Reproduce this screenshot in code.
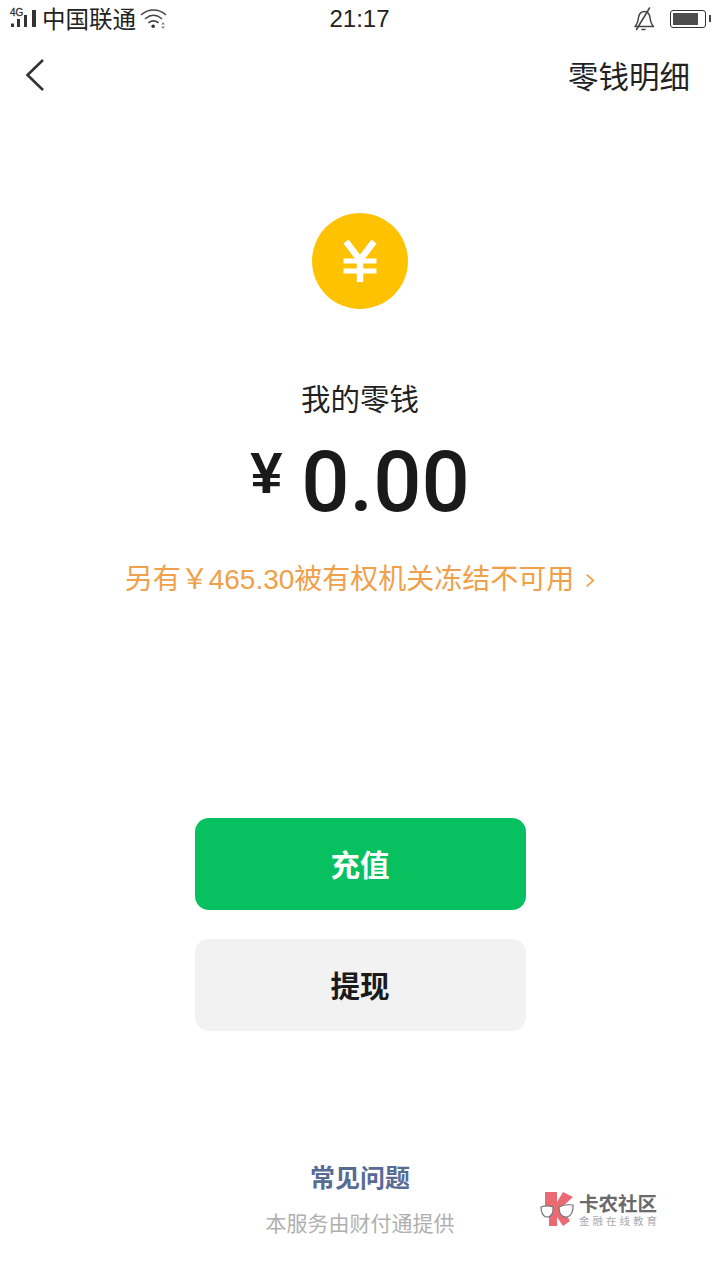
<div class="page">
  <header class="status">
    <div class="left">
      <span class="signal">
        <span class="net">4G</span>
        <svg width="28" height="20" viewBox="0 0 28 20"><g fill="#333"><rect x="0" y="16.500" width="3" height="3.500"/><rect x="6" y="12" width="3" height="8"/><rect x="13" y="8" width="3" height="12"/><rect x="21" y="3" width="4" height="17"/></g></svg>
      </span>
      <span class="carrier">中国联通</span>
      <svg class="wifi" width="28" height="22" viewBox="0 0 28 22" fill="none" stroke="#444" stroke-width="1.600" stroke-linecap="round"><path d="M1.500 6.500C8.500 .5 18.500 .5 25.500 6.500"/><path d="M5.500 10.500C10.500 6.500 16.500 6.500 21.500 10.500"/><path d="M9 14.500C12 12.300 15 12.300 18 14.500"/><circle cx="13.200" cy="18.200" r="1.800" fill="#333" stroke="none"/><path d="M21 16.500h4l-2-2.600zM21 18.500h4l-2 2.600z" fill="#888" stroke="none"/></svg>
    </div>
    <span class="time">21:17</span>
    <div class="right">
      <svg width="22" height="24" viewBox="0 0 22 24" fill="none" stroke="#444" stroke-width="1.500" stroke-linejoin="round" stroke-linecap="round"><path d="M2 19.500C4.500 17 5 14.500 5.400 11 6 6.500 8 4.500 11.500 4.500c3.500 0 5 2.500 5.600 6.500.4 3.500 1.200 6.300 3.400 8.500z"/><path d="M3.500 22.500 16.500 1"/><path d="M9 22.500h3"/></svg>
      <span class="battery"><span class="cap"></span><span class="fill"></span></span>
    </div>
  </header>

  <nav class="nav">
    <svg class="back" width="22" height="34" viewBox="0 0 22 34" fill="none" stroke="#333" stroke-width="2.600"><path d="M19 2 3.500 17 19 32"/></svg>
    <span class="detail">零钱明细</span>
  </nav>

  <main class="main">
    <div class="coin">
      <svg width="36" height="42" viewBox="0 0 36 42" fill="none" stroke="#fff"><path d="M4 1.500 18 20 32 1.500" stroke-width="6.500"/><path d="M18 18v24" stroke-width="6.500"/><path d="M1.500 21h33M1.500 31h33" stroke-width="5"/></svg>
    </div>
    <div class="label">我的零钱</div>
    <div class="amount"><span class="yen">¥</span><span class="value">0.00</span></div>
    <div class="frozen">
      <span>另有￥465.30被有权机关冻结不可用</span>
      <svg width="10" height="17" viewBox="0 0 12 18" fill="none" stroke="#f0a04a" stroke-width="2"><path d="M2 2l8 7-8 7"/></svg>
    </div>
    <button class="btn primary">充值</button>
    <button class="btn secondary">提现</button>
  </main>

  <footer class="footer">
    <div class="faq">常见问题</div>
    <div class="service">本服务由财付通提供</div>
    <div class="logo">
      <svg width="36" height="38" viewBox="0 0 36 38"><path d="M5 2h12v10l6-10 10 5-11 10 8 14-7 5-6-9v9H9v-9L5 17z" fill="#e96a72"/><path d="M1 17c4-1.500 8-1.500 12 0 .5 5-1 10-6 10-4 0-6-5-6-10zM19 17c5-2.500 10-2.500 14-2 .5 6-2 12-7 12-5 0-7-5-7-10z" fill="#fff" stroke="#777" stroke-width="1.200"/></svg>
      <div class="logo-text">
        <div class="logo-name">卡农社区</div>
        <div class="logo-sub">金融在线教育</div>
      </div>
    </div>
  </footer>
</div>

<style>
  :global(body) { margin: 0; background: #fff; }
  .page {
    width: 720px; height: 1280px; background: #fff; display: flex; flex-direction: column;
    font-family: "Noto Sans CJK SC", "Liberation Sans", sans-serif; color: #1a1a1a; overflow: hidden;
    position: relative;
  }
  .status { height: 38px; display: grid; grid-template-columns: 1fr auto 1fr; align-items: center; padding: 0 11px 0 10px; }
  .left { display: flex; align-items: center; }
  .signal { position: relative; width: 32px; height: 26px; display: block; }
  .signal svg { position: absolute; left: 1px; top: 1px; }
  .net { position: absolute; left: 0; top: 1px; font: 400 10px/11px "Liberation Sans", sans-serif; color: #333; -webkit-text-stroke: .3px #333; }
  .carrier { font-size: 23.500px; line-height: 30px; color: #222; position: relative; top: -1px; }
  .wifi { margin-left: 4px; }
  .time { font: 400 24px/30px "Liberation Sans", sans-serif; color: #222; }
  .right { display: flex; align-items: center; justify-content: flex-end; gap: 15px; }
  .battery { position: relative; width: 34px; height: 16px; border: 1.500px solid #333; border-radius: 3px; display: block; margin-right: 3px; }
  .fill { position: absolute; left: 2px; top: 2px; bottom: 2px; width: 25px; background: #4d4d4d; }
  .cap { position: absolute; right: -6px; top: 4px; width: 2px; height: 7px; background: #444; }
  .nav { height: 74px; display: flex; align-items: center; justify-content: space-between; padding: 0 30px 0 24px; }
  .back { display: block; }
  .detail { font-size: 30.500px; line-height: 40px; color: #222; }
  .main { display: flex; flex-direction: column; align-items: center; padding-top: 101px; }
  .coin { width: 96px; height: 96px; border-radius: 50%; background: #fec200; display: flex; align-items: center; justify-content: center; }
  .label { margin-top: 68px; font-size: 29.500px; line-height: 40px; color: #222; }
  .amount { margin-top: 15px; display: flex; align-items: flex-start; height: 100px; }
  .yen { font: 700 58px/60px "Liberation Sans", sans-serif; margin-top: 11px; margin-right: 19px; width: 32px; }
  .value { font: 500 85px/100px "Roboto", sans-serif; color: #1a1a1a; }
  .frozen { margin-top: 29px; display: flex; align-items: center; gap: 11px; color: #f0a04a; font-family: "Liberation Sans", "Noto Sans CJK SC", sans-serif; font-size: 28px; line-height: 38px; }
  .btn { width: 331px; height: 92px; border: 0; border-radius: 14px; font-family: inherit; font-size: 29.500px; font-weight: 700; padding: 0 0 2px; display: block; }
  .primary { margin-top: 219px; background: #07c160; color: #fff; }
  .secondary { margin-top: 29px; background: #f2f2f2; color: #1a1a1a; }
  .footer { display: flex; flex-direction: column; align-items: center; padding-top: 127px; }
  .faq { font-size: 25px; line-height: 36px; font-weight: 700; color: #576b95; }
  .service { margin-top: 13px; font-size: 21px; line-height: 30px; color: #b0b0b0; }
  .logo { position: absolute; left: 540px; top: 1190px; display: flex; align-items: center; gap: 3px; }
  .logo-text { display: flex; flex-direction: column; }
  .logo-name { font-size: 19.500px; line-height: 23px; font-weight: 700; color: #6a6a6a; white-space: nowrap; }
  .logo-sub { font-size: 10.500px; line-height: 14px; letter-spacing: 3px; color: #aaa; white-space: nowrap; }
</style>
